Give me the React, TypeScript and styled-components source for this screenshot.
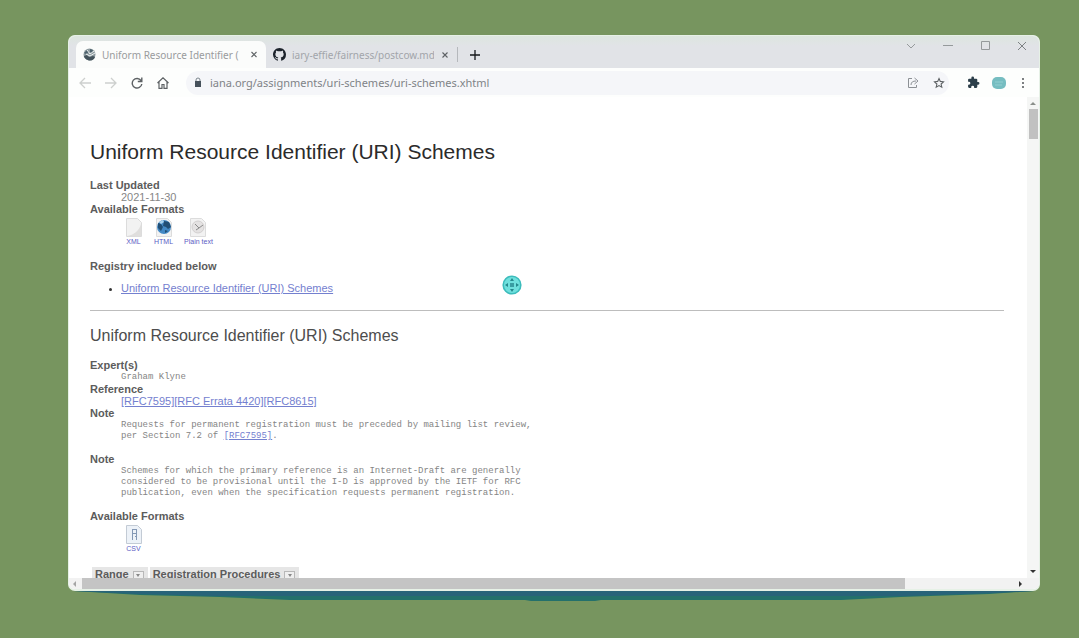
import React from "react";
import styled, { createGlobalStyle } from "styled-components";

const sans = `"Liberation Sans", Arial, sans-serif`;
const ui = `"Noto Sans", "Open Sans", sans-serif`;
const mono = `"Liberation Mono", "DejaVu Sans Mono", monospace`;

const GlobalStyle = createGlobalStyle`
  * { box-sizing: border-box; }
  body { margin: 0; background: #77955f; font-family: ${sans}; }
`;

const Desktop = styled.div`
  display: flex;
  flex-direction: column;
  height: 100vh;
  padding: 35px 39px 37px 68px;
  background: #77955f;
`;

const BrowserWindow = styled.div`
  position: relative;
  flex: 1;
  min-height: 0;
  display: flex;
  flex-direction: column;
  overflow: hidden;
  border-radius: 7px;
  border: 1px solid #e6f1e6;
  border-bottom-width: 2px;
  background: #fff;
`;

const WindowEdge = styled.svg`
  display: block;
  flex: none;
  width: 100%;
  height: 10px;
`;

const TabStrip = styled.div`
  display: flex;
  align-items: flex-end;
  height: 32px;
  flex: none;
  padding-left: 7px;
  background: linear-gradient(#dde6df, #e1e3e7 10px);
`;

const Tab = styled.div<{ $active?: boolean; $width: number }>`
  display: flex;
  align-items: center;
  gap: 6px;
  width: ${(p) => p.$width}px;
  height: 27px;
  padding: 0 7px;
  border-radius: 7px 7px 0 0;
  background: ${(p) => (p.$active ? "#fbfcfb" : "transparent")};
`;

const TabTitle = styled.button<{ $faded?: boolean }>`
  flex: 1;
  min-width: 0;
  padding: 0;
  border: 0;
  background: none;
  overflow: hidden;
  white-space: nowrap;
  text-align: left;
  font: 10px/14px ${ui};
  color: ${(p) => (p.$faded ? "#a2a5aa" : "#999b9d")};
`;

const IconButton = styled.button<{ $size?: number; $color?: string }>`
  display: flex;
  align-items: center;
  justify-content: center;
  flex: none;
  width: ${(p) => p.$size ?? 14}px;
  height: ${(p) => p.$size ?? 14}px;
  padding: 0;
  border: 0;
  background: none;
  color: ${(p) => p.$color ?? "#5d6164"};
`;

const NewTab = styled.div`
  display: flex;
  align-items: center;
  height: 15px;
  margin-bottom: 6px;
  padding-left: 10px;
  border-left: 1px solid #b5b8bc;
`;

const WindowControls = styled.div`
  display: flex;
  gap: 23px;
  margin: 0 10px 15px auto;
`;

const Toolbar = styled.div`
  display: flex;
  align-items: center;
  gap: 12px;
  height: 29px;
  flex: none;
  padding: 0 11px 0 9px;
  background: #fdfefd;
`;

const AddressBar = styled.div`
  display: flex;
  align-items: center;
  flex: 1;
  gap: 12px;
  height: 24px;
  margin: 0 5px 0 4px;
  padding: 0 3px 0 8px;
  border-radius: 12px;
  background: #f5f6f9;
`;

const Address = styled.input`
  flex: 1;
  min-width: 0;
  margin-left: -4px;
  padding: 0;
  border: 0;
  outline: 0;
  background: none;
  font: 11px/16px ${ui};
  color: #808387;
`;

const Viewport = styled.div`
  display: flex;
  flex: 1;
  min-height: 0;
`;

const Page = styled.main`
  flex: 1;
  min-width: 0;
  overflow: hidden;
  padding: 42px 23px 0 21px;
`;

const Title = styled.h1`
  margin: 0 0 14px;
  font: 21px/26px ${sans};
  color: #2b2b2b;
`;

const Subtitle = styled.h2`
  margin: 0 0 13px;
  font: 16px/20px ${sans};
  color: #4d4d4d;
`;

const Rule = styled.hr`
  margin: 15px 0;
  border: 0;
  border-top: 1px solid #bdbdbd;
`;

const Facts = styled.dl`
  margin: 0;
`;

const Term = styled.dt<{ $spaced?: boolean }>`
  margin-top: ${(p) => (p.$spaced ? 11 : 0)}px;
  font: bold 11px/12px ${sans};
  color: #5c5c5c;
`;

const SectionLabel = styled.p`
  margin: 14px 0 0;
  font: bold 11px/12px ${sans};
  color: #5c5c5c;
`;

const Detail = styled.dd`
  margin: 0 0 0 31px;
  font: 11px/12px ${sans};
  color: #868686;
`;

const Note = styled.pre`
  margin: 0;
  padding-top: 1px;
  font: 9px/11px ${mono};
  color: #858585;
`;

const NoteLine = styled.span`
  display: block;
`;

const Link = styled.a`
  color: #7480cf;
`;

const Formats = styled.div`
  display: flex;
  gap: 11px;
  padding: 3px 0 0 3px;
`;

const FormatLink = styled.a`
  display: flex;
  flex-direction: column;
  align-items: center;
  gap: 1px;
  min-width: 19px;
  font: 7px/8px ${sans};
  text-decoration: none;
  color: #5b5bc4;
`;

const Contents = styled.ul`
  margin: 9px 0 0;
  padding-left: 31px;
  font: 11px/14px ${sans};

  li::marker {
    color: #333;
    font-size: 9px;
  }
`;

const Registry = styled.table`
  margin-top: 14px;
  border-spacing: 2px 0;
  font: bold 11px/14px ${sans};
  color: #5c5c5c;

  th {
    padding: 0 4px 0 3px;
    text-align: left;
    background: #e6e6e6;
  }
`;

const SortButton = styled.button`
  display: inline-flex;
  width: 11px;
  height: 9px;
  margin-left: 4px;
  padding: 0;
  border: 1px solid #b8b8b8;
  align-items: center;
  justify-content: center;
  background: #efefef;
`;

const VerticalBar = styled.div`
  display: flex;
  flex-direction: column;
  align-items: center;
  flex: none;
  width: 12px;
  padding: 4px 0;
  background: #f5f6f5;
`;

const HorizontalBar = styled.div`
  display: flex;
  align-items: center;
  flex: none;
  height: 11px;
  padding: 0 16px 0 3px;
  background: #f2f2f2;
`;

const VerticalThumb = styled.div`
  width: 9px;
  height: 30px;
  margin: 2px 0 auto;
  background: #c1c1c1;
`;

const HorizontalTrack = styled.div`
  flex: 1;
  height: 100%;
  margin: 0 5px 0 4px;
`;

const HorizontalThumb = styled.div`
  width: 88.5%;
  height: 100%;
  background: #c4c4c4;
`;

const Pointer = styled.svg`
  position: absolute;
  left: 433px;
  top: 239px;
`;

type ArrowProps = { d: string; color?: string };
const Arrow = ({ d, color = "#333" }: ArrowProps) => (
  <svg width="6" height="6" viewBox="0 0 6 6"><path d={d} fill={color} /></svg>
);

const Stroke = ({ d, size = 12, width = 1.3 }: { d: string; size?: number; width?: number }) => (
  <svg width={size} height={size} viewBox="0 0 12 12" fill="none" stroke="currentColor" strokeWidth={width}>
    <path d={d} />
  </svg>
);

const Globe = () => (
  <svg width="13" height="13" viewBox="0 0 13 13">
    <circle cx="6.5" cy="6.5" r="6" fill="#8d9a9f" />
    <path d="M1 8l3-1 2 2 4-1 2 1c-1 3-4 4-6 3.500S1 10 1 8z" fill="#43525b" />
    <path d="M1 5l3-3 2 2-3 2zM7 1l3 1-1 3-2-1z" fill="#4d626d" />
    <path d="M4 2l3 4 4-3M3 6l4 2 5-3" fill="none" stroke="#eef2f2" strokeWidth="1" />
  </svg>
);

const GitHub = () => (
  <svg width="13" height="13" viewBox="0 0 16 16" fill="#1c232b">
    <path d="M8 0C3.580 0 0 3.580 0 8c0 3.540 2.290 6.530 5.470 7.590.4.070.55-.17.55-.38 0-.19-.01-.82-.01-1.490-2.010.37-2.530-.49-2.690-.94-.09-.23-.48-.94-.82-1.130-.28-.15-.68-.52-.01-.53.63-.01 1.080.58 1.230.82.72 1.210 1.870.87 2.330.66.070-.52.28-.87.51-1.070-1.780-.2-3.640-.89-3.640-3.950 0-.87.31-1.590.82-2.150-.08-.2-.36-1.020.08-2.120 0 0 .67-.21 2.200.82.64-.18 1.320-.27 2-.27s1.360.09 2 .27c1.530-1.040 2.200-.82 2.200-.82.44 1.100.16 1.920.08 2.120.51.56.82 1.270.82 2.150 0 3.070-1.870 3.750-3.650 3.950.29.25.54.73.54 1.480 0 1.070-.01 1.930-.01 2.200 0 .21.15.46.55.38A8.010 8.010 0 0 0 16 8c0-4.420-3.580-8-8-8z" />
  </svg>
);

type Kind = "xml" | "html" | "text" | "csv";

const FormatIcon = ({ kind }: { kind: Kind }) => (
  <svg width="18" height="19" viewBox="0 0 18 19">
    <path d="M1.500 .5h11l4 4v14h-15z" fill={kind === "csv" ? "#edf2f8" : "#f2f2f2"} stroke={kind === "csv" ? "#c3cbd5" : "#dcdcdc"} />
    {kind === "xml" && <path d="M2 18c7-1 12-5 14-12v12z" fill="#dfdedd" />}
    {kind === "html" && (
      <g>
        <circle cx="9" cy="9" r="7" fill="#4389c6" />
        <path d="M9 3l5 1 2 5-3 2-2-2-3-1zM3 5l3 1 2 3-2 4-3-3zM10 12l3 1-3 2z" fill="#214e75" />
        <path d="M4 4l4-2 1 2-3 2z" fill="#aad3ef" />
      </g>
    )}
    {kind === "text" && (
      <g fill="none">
        <circle cx="9" cy="9" r="6" fill="#e4e2e2" stroke="#d2cfcf" />
        <path d="M6 6l4 4 4-3M10 10l-3 2" stroke="#8a8a8a" />
      </g>
    )}
    {kind === "csv" && <path d="M7.500 4v11M11.500 4v11M7 4.500h5M7 8.500h5M10 11.500h2" fill="none" stroke="#8398b5" />}
  </svg>
);

const FormatItem = ({ kind, label }: { kind: Kind; label: string }) => (
  <FormatLink href="#"><FormatIcon kind={kind} />{label}</FormatLink>
);

const close = "M3 3l6 6M9 3l-6 6";

export default function App() {
  return (
    <Desktop>
      <GlobalStyle />
      <BrowserWindow>
        <TabStrip>
          <Tab $active $width={190}>
            <Globe />
            <TabTitle>Uniform Resource Identifier (</TabTitle>
            <IconButton $size={10} aria-label="Close tab"><Stroke d={close} size={11} /></IconButton>
          </Tab>
          <Tab $width={191}>
            <GitHub />
            <TabTitle $faded>iary-effie/fairness/postcow.md</TabTitle>
            <IconButton $size={10} aria-label="Close tab"><Stroke d={close} size={12} /></IconButton>
          </Tab>
          <NewTab>
            <IconButton aria-label="New tab" $color="#15181b"><Stroke d="M6 1v10M1 6h10" /></IconButton>
          </NewTab>
          <WindowControls>
            <IconButton aria-label="Search tabs" $color="#959a9b"><Stroke d="M2 4l4 4 4-4" width={1} /></IconButton>
            <IconButton aria-label="Minimize" $color="#959a9b"><Stroke d="M1 5.500h10" width={1} /></IconButton>
            <IconButton aria-label="Maximize" $color="#959a9b"><Stroke d="M2.500 1.500h8v8h-8z" width={1} /></IconButton>
            <IconButton aria-label="Close" $color="#7d8283"><Stroke d="M2 2l8 8M10 2l-8 8" width={1} /></IconButton>
          </WindowControls>
        </TabStrip>
        <Toolbar>
          <IconButton aria-label="Back" $color="#cdd0ce"><Stroke d="M12 6H1M6 1L1 6l5 5" /></IconButton>
          <IconButton aria-label="Forward" $color="#cdd0ce"><Stroke d="M0 6h11M6 1l5 5-5 5" /></IconButton>
          <IconButton aria-label="Reload"><Stroke d="M10 3.500A4.800 4.800 0 1 0 10.800 7M10.800 .5v4h-4" width={1.4} /></IconButton>
          <IconButton aria-label="Home"><Stroke d="M.5 6L6 .8 11.500 6M2 5v6.300h3V7.500h2v3.800h3V5" width={1.2} /></IconButton>
          <AddressBar>
            <svg width="8" height="11" viewBox="0 0 8 11">
              <path d="M2 5V3a2 2 0 0 1 4 0v2" fill="none" stroke="#7b858c" />
              <path d="M1 4h6v6H1z" fill="#46515b" />
            </svg>
            <Address aria-label="Address" defaultValue="iana.org/assignments/uri-schemes/uri-schemes.xhtml" />
            <IconButton aria-label="Share" $color="#8c9095"><Stroke d="M5 1.500H1.500v9h8V8M4 8c0-3 2-4 5-4M7.500 1L11 4 7.500 7" width={1} /></IconButton>
            <IconButton aria-label="Bookmark"><Stroke d="M6 1.500l1.300 2.900 3.200.4-2.400 2.200.7 3.200L6 8.600l-2.800 1.600.7-3.200-2.400-2.200 3.200-.4z" width={1.1} /></IconButton>
          </AddressBar>
          <IconButton aria-label="Extensions" $color="#2c3f4a">
            <svg width="13" height="13" viewBox="0 0 24 24" fill="currentColor">
              <path d="M20.500 11H19V7a2 2 0 0 0-2-2h-4V3.500a2.500 2.500 0 0 0-5 0V5H4a2 2 0 0 0-2 2v3.800h1.500a2.700 2.700 0 0 1 0 5.400H2V20a2 2 0 0 0 2 2h3.800v-1.500a2.700 2.700 0 0 1 5.400 0V22H17a2 2 0 0 0 2-2v-4h1.500a2.500 2.500 0 0 0 0-5z" />
            </svg>
          </IconButton>
          <IconButton aria-label="Profile">
            <svg width="14" height="12" viewBox="0 0 14 12">
              <rect width="14" height="12" rx="5" fill="#76bdc1" />
              <path d="M3 5h8M3 8h7" stroke="#93ced0" />
            </svg>
          </IconButton>
          <IconButton aria-label="Menu" $size={10}>
            <svg width="4" height="12" viewBox="0 0 4 12" fill="#5d6164">
              <circle cx="2" cy="2" r="1.100" /><circle cx="2" cy="6" r="1.100" /><circle cx="2" cy="10" r="1.100" />
            </svg>
          </IconButton>
        </Toolbar>
        <Viewport>
          <Page>
            <Title>Uniform Resource Identifier (URI) Schemes</Title>
            <Facts>
              <Term>Last Updated</Term>
              <Detail>2021-11-30</Detail>
              <Term>Available Formats</Term>
              <Detail>
                <Formats>
                  <FormatItem kind="xml" label="XML" />
                  <FormatItem kind="html" label="HTML" />
                  <FormatItem kind="text" label="Plain text" />
                </Formats>
              </Detail>
            </Facts>
            <SectionLabel>Registry included below</SectionLabel>
            <Contents>
              <li><Link href="#schemes">Uniform Resource Identifier (URI) Schemes</Link></li>
            </Contents>
            <Rule />
            <Subtitle id="schemes">Uniform Resource Identifier (URI) Schemes</Subtitle>
            <Facts>
              <Term>Expert(s)</Term>
              <Detail><Note>Graham Klyne</Note></Detail>
              <Term>Reference</Term>
              <Detail>
                <Link href="#">[RFC7595]</Link><Link href="#">[RFC Errata 4420]</Link><Link href="#">[RFC8615]</Link>
              </Detail>
              <Term>Note</Term>
              <Detail>
                <Note>
                  <NoteLine>Requests for permanent registration must be preceded by mailing list review,</NoteLine>
                  <NoteLine>per Section 7.2 of <Link href="#">[RFC7595]</Link>.</NoteLine>
                </Note>
              </Detail>
              <Term $spaced>Note</Term>
              <Detail>
                <Note>
                  <NoteLine>Schemes for which the primary reference is an Internet-Draft are generally</NoteLine>
                  <NoteLine>considered to be provisional until the I-D is approved by the IETF for RFC</NoteLine>
                  <NoteLine>publication, even when the specification requests permanent registration.</NoteLine>
                </Note>
              </Detail>
              <Term $spaced>Available Formats</Term>
              <Detail>
                <Formats><FormatItem kind="csv" label="CSV" /></Formats>
              </Detail>
            </Facts>
            <Registry>
              <thead>
                <tr>
                  <th>Range<SortButton aria-label="Sort by range"><Arrow d="M1 2h4L3 5z" color="#888" /></SortButton></th>
                  <th>Registration Procedures<SortButton aria-label="Sort by procedures"><Arrow d="M1 2h4L3 5z" color="#888" /></SortButton></th>
                </tr>
              </thead>
            </Registry>
          </Page>
          <VerticalBar>
            <Arrow d="M0 4h6L3 1z" color="#8b8f8b" />
            <VerticalThumb />
            <Arrow d="M0 2h6L3 5z" />
          </VerticalBar>
        </Viewport>
        <HorizontalBar>
          <Arrow d="M4 0v6L1 3z" color="#a5a5a5" />
          <HorizontalTrack><HorizontalThumb /></HorizontalTrack>
          <Arrow d="M2 0v6l3-3z" />
        </HorizontalBar>
        <Pointer width="20" height="20" viewBox="0 0 20 20">
          <circle cx="10" cy="10" r="8.800" fill="#6fe0dd" stroke="#3cbcbc" strokeWidth="1.600" />
          <path d="M10 3l2 3H8zM10 17l2-3H8zM3 10l3-2v4zM17 10l-3-2v4z" fill="#26898e" />
          <path d="M8 8h4v4H8z" fill="#3a9da2" />
        </Pointer>
      </BrowserWindow>
      <WindowEdge viewBox="0 0 972 10" preserveAspectRatio="none">
        <path d="M6 0h960l-45 3-88 3-60 3H533l-6 1H463l-6-1H222l-70-3-80-2z" fill="#23706b" />
        <path d="M6 0h960l-40 2-90 3H150L70 3z" fill="#286379" />
      </WindowEdge>
    </Desktop>
  );
}
